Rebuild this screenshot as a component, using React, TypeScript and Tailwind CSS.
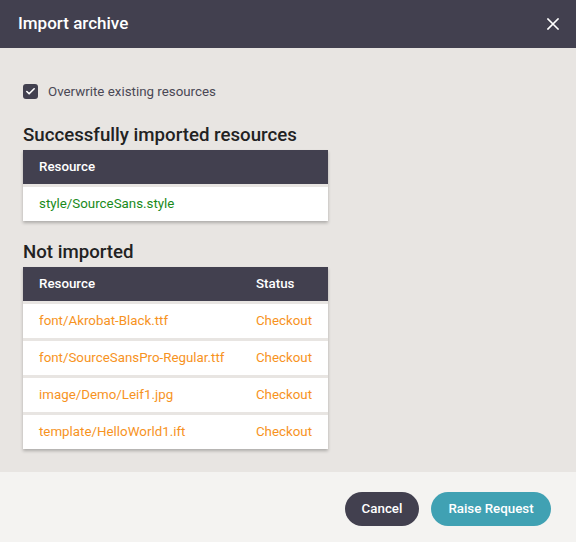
import { Check } from 'lucide-react'

const FAILED = [
  'font/Akrobat-Black.ttf',
  'font/SourceSansPro-Regular.ttf',
  'image/Demo/Leif1.jpg',
  'template/HelloWorld1.ift',
]

function Header() {
  return (
    <div className="flex h-[48px] items-center justify-between bg-[#42404f] pl-[18px] pr-[17px]">
      <h1 className="text-[17px] font-medium text-white">Import archive</h1>
      <button className="flex h-[12px] w-[12px] items-center justify-center text-white">
        <svg width="12" height="12" viewBox="0 0 12 12" fill="none">
          <path d="M1 1L11 11M11 1L1 11" stroke="currentColor" strokeWidth="1.6" strokeLinecap="square" />
        </svg>
      </button>
    </div>
  )
}

export default function App() {
  return (
    <div
      className="flex h-[542px] w-[576px] flex-col bg-[#e8e5e2]"
      style={{ fontFamily: 'Roboto, "Liberation Sans", sans-serif' }}
    >
      <Header />

      <div className="flex-1 px-[23px] pt-[34px]">
        {/* overwrite option */}
        <label className="flex items-center gap-[10px]">
          <span className="flex h-[15px] w-[15px] items-center justify-center rounded-[3px] bg-[#42404f]">
            <Check size={11} strokeWidth={3.5} className="text-white" />
          </span>
          <span className="text-[13.33px] text-[#4a4855]">Overwrite existing resources</span>
        </label>

        <h2 className="mt-[22px] text-[18.67px] leading-[22px] font-medium text-[#222]">
          Successfully imported resources
        </h2>
        <div className="mt-[4px] flex w-[305px] flex-col gap-[3px] shadow-[0_2px_3px_rgba(0,0,0,0.25)]">
          <div className="flex h-[34px] items-center bg-[#42404f] px-[16px] text-[13.33px] font-medium text-white">
            Resource
          </div>
          <div className="flex h-[34px] items-center bg-white px-[16px] text-[13.33px] text-[#1a8a1a]">
            style/SourceSans.style
          </div>
        </div>

        <h2 className="mt-[20px] text-[18.67px] leading-[22px] font-medium text-[#222]">Not imported</h2>
        <div className="mt-[4px] flex w-[305px] flex-col gap-[3px] shadow-[0_2px_3px_rgba(0,0,0,0.25)]">
          <div className="flex h-[34px] items-center bg-[#42404f] px-[16px] text-[13.33px] font-medium text-white">
            <span className="w-[217px]">Resource</span>
            <span>Status</span>
          </div>
          {FAILED.map((r) => (
            <div key={r} className="flex h-[34px] items-center bg-white px-[16px] text-[13.33px] text-[#f7931e]">
              <span className="w-[217px]">{r}</span>
              <span>Checkout</span>
            </div>
          ))}
        </div>
      </div>

      <div className="flex h-[70px] items-start justify-end gap-[12px] bg-[#f4f3f1] pt-[20px] pr-[25px]">
        <button className="h-[34px] w-[74px] rounded-full bg-[#42404f] text-[13.33px] font-medium text-white">
          Cancel
        </button>
        <button className="h-[34px] w-[120px] rounded-full bg-[#40a1b3] text-[13.33px] font-medium text-white">
          Raise Request
        </button>
      </div>
    </div>
  )
}
